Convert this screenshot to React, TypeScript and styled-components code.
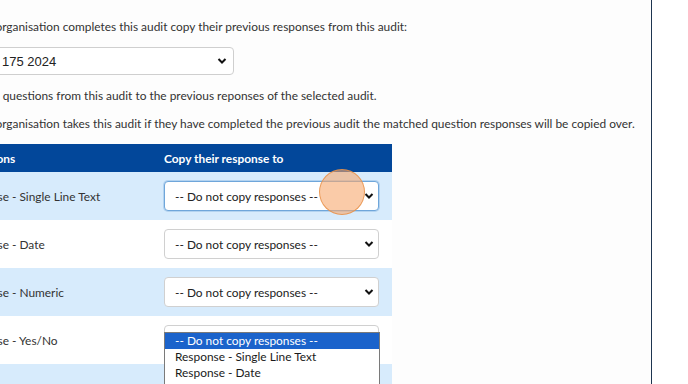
import React from "react";
import styled, { createGlobalStyle } from "styled-components";

const GlobalStyle = createGlobalStyle`
  html, body {
    margin: 0;
    padding: 0;
    background: #ffffff;
  }
  body {
    font-family: "Lato", "Open Sans", sans-serif;
    color: #333333;
  }
`;

const Viewport = styled.div`
  width: 688px;
  height: 384px;
  overflow: hidden;
  display: flex;
  background: #ffffff;
`;

const Panel = styled.div`
  width: 651px;
  height: 384px;
  overflow: hidden;
  border-right: 1px solid #1d3550;
  background: #fdfdfd;
  position: relative;
`;

const Content = styled.div`
  margin-left: -55px;
  padding-top: 18px;
  width: 760px;
`;

const Para = styled.p<{ gap?: number; indent?: number }>`
  margin: 0 0 ${(p) => p.gap ?? 0}px 0;
  padding-left: ${(p) => p.indent ?? 0}px;
  font-size: 11.9px;
  line-height: 18px;
  white-space: nowrap;
`;

const SourceSelect = styled.div`
  margin: 11px 0 12px 0;
  width: 289px;
  height: 28px;
  box-sizing: border-box;
  border: 1px solid #cfcfcf;
  border-radius: 4px;
  background: #fff;
  display: flex;
  align-items: center;
  justify-content: space-between;
  padding: 0 6px 0 9px;
  font-family: "Liberation Sans", Arial, sans-serif;
  font-size: 13px;
  color: #222;
`;

const Table = styled.div`
  margin-top: 11px;
  width: 447px;
`;

const HeaderRow = styled.div`
  display: grid;
  grid-template-columns: 211px 236px;
  height: 28px;
  align-items: center;
  background: #02479a;
  color: #ffffff;
  font-weight: 700;
  font-size: 11.9px;
`;

const Cell = styled.div<{ lead?: number }>`
  padding-left: ${(p) => p.lead ?? 8}px;
  white-space: nowrap;
  position: relative;
`;

const Row = styled.div<{ shaded: boolean }>`
  display: grid;
  grid-template-columns: 211px 236px;
  height: 48px;
  align-items: center;
  background: ${(p) => (p.shaded ? "#d7ebfc" : "#ffffff")};
  font-size: 11.9px;
`;

const RowSelect = styled.div<{ focused?: boolean }>`
  width: 215px;
  height: 30px;
  box-sizing: border-box;
  border: 1px solid ${(p) => (p.focused ? "#6fa6da" : "#d0d0d0")};
  box-shadow: ${(p) => (p.focused ? "0 0 0 1px rgba(111,166,218,0.35)" : "none")};
  border-radius: 4px;
  background: #fff;
  display: flex;
  align-items: center;
  justify-content: space-between;
  padding: 0 4px 0 10px;
  font-size: 11.9px;
  color: #222;
`;

const Chevron = () => (
  <svg width="10" height="8" viewBox="0 0 10 8">
    <path d="M1.5 2 L5 5.5 L8.5 2" fill="none" stroke="#111" strokeWidth="2" />
  </svg>
);

const OptionList = styled.div`
  position: absolute;
  left: 8px;
  top: 7px;
  width: 216px;
  box-sizing: border-box;
  border: 1px solid #7a7a7a;
  background: #fff;
  z-index: 2;
  padding-bottom: 20px;
`;

const Option = styled.div<{ active?: boolean }>`
  height: 16px;
  line-height: 16px;
  padding-left: 10px;
  font-size: 11.9px;
  background: ${(p) => (p.active ? "#1b63cb" : "#fff")};
  color: ${(p) => (p.active ? "#fff" : "#1a1a1a")};
`;

const ClickMarker = styled.div`
  position: absolute;
  left: 319px;
  top: 169px;
  width: 44px;
  height: 44px;
  border-radius: 50%;
  background: rgba(246, 168, 110, 0.6);
  border: 1.5px solid rgba(232, 145, 72, 0.85);
  z-index: 3;
`;

const questions = [
  "Response - Single Line Text",
  "Response - Date",
  "Response - Numeric",
  "Response - Yes/No",
  "Response - Yes/No/Not Provided/N/A",
];

const options = [
  "-- Do not copy responses --",
  "Response - Single Line Text",
  "Response - Date",
  "Response - Numeric",
];

export default function App() {
  return (
    <>
      <GlobalStyle />
      <Viewport>
        <Panel>
          <Content>
            <Para>
              When an organisation completes this audit copy their previous responses from this audit:
            </Para>
            <SourceSelect>
              <span>Version 175 2024</span>
              <Chevron />
            </SourceSelect>
            <Para gap={10} indent={11}>
              Map the questions from this audit to the previous reponses of the selected audit.
            </Para>
            <Para>
              When an organisation takes this audit if they have completed the previous audit the matched question
              responses will be copied over.
            </Para>
            <Table>
              <HeaderRow>
                <Cell lead={16}>Questions</Cell>
                <Cell>Copy their response to</Cell>
              </HeaderRow>
              {questions.map((q, i) => (
                <Row key={q} shaded={i % 2 === 0}>
                  <Cell lead={14}>{q}</Cell>
                  <Cell>
                    {i < 4 && (
                      <RowSelect focused={i === 0}>
                        <span>-- Do not copy responses --</span>
                        <Chevron />
                      </RowSelect>
                    )}
                    {i === 3 && (
                      <OptionList>
                        {options.map((o, j) => (
                          <Option key={o} active={j === 0}>
                            {o}
                          </Option>
                        ))}
                      </OptionList>
                    )}
                  </Cell>
                </Row>
              ))}
            </Table>
          </Content>
          <ClickMarker />
        </Panel>
      </Viewport>
    </>
  );
}
